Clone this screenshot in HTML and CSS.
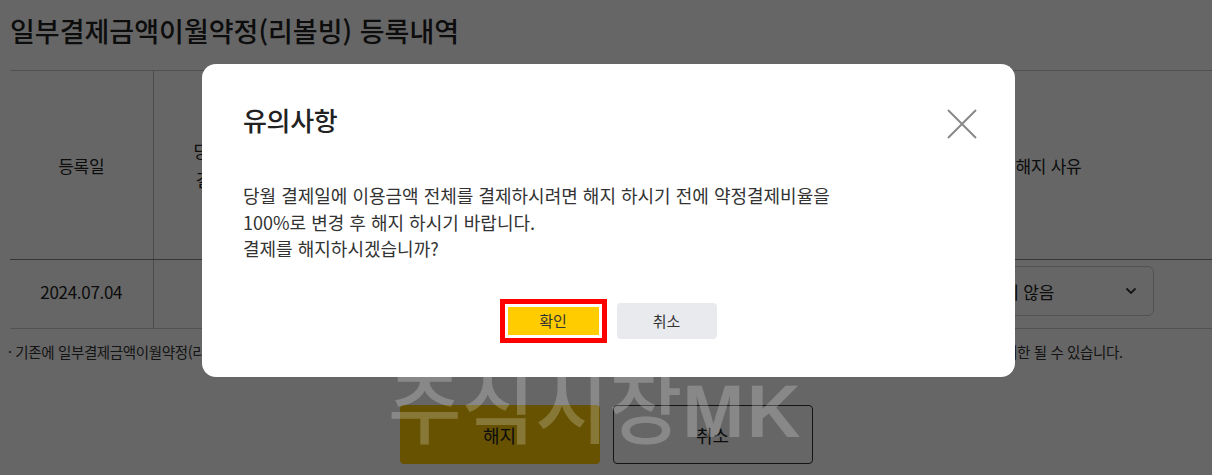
FILE: index.html
```html
<!DOCTYPE html>
<html lang="ko">
<head>
    <meta charset="UTF-8">
    <meta name="viewport" content="width=device-width, initial-scale=1.0">
    <title>리볼빙 등록내역</title>
    <link rel="stylesheet" href="styles.css">
</head>
<body>
<div class="page">
    <h2 class="page-title">일부결제금액이월약정(리볼빙) 등록내역</h2>

    <table class="history">
        <colgroup>
            <col class="col-date">
            <col class="col-rate">
            <col class="col-mid">
            <col class="col-mid">
            <col class="col-reason">
        </colgroup>
        <thead>
        <tr>
            <th>등록일</th>
            <th>당월 약정<br>결제비율</th>
            <th>약정결제비율</th>
            <th>최소결제비율</th>
            <th class="th-reason">해지 사유</th>
        </tr>
        </thead>
        <tbody>
        <tr>
            <td>2024.07.04</td>
            <td>10%</td>
            <td>10%</td>
            <td>10%</td>
            <td class="td-reason">
                <div class="select-box">
                    <span>선택하지 않음</span>
                    <svg width="12" height="8" viewBox="0 0 12 8"><path d="M1.5 1.5 L6 6 L10.5 1.5" fill="none" stroke="#333" stroke-width="1.8"/></svg>
                </div>
            </td>
        </tr>
        </tbody>
    </table>

    <p class="note">· 기존에 일부결제금액이월약정(리볼빙)을 이용 중이신 고객님께서 해지하실 경우 일부결제금액이월약정(리볼빙) 잔액은 기존 조건으로 상환되며 향후 일정 기간 신규 이용이 제한 될 수 있습니다.</p>

    <div class="actions">
        <button class="btn btn-primary">해지</button>
        <button class="btn btn-outline">취소</button>
    </div>
</div>

<div class="dim"></div>
<div class="watermark">주식시장<span class="wm-latin">MK</span></div>

<div class="modal">
    <div class="modal-head">
        <h3 class="modal-title">유의사항</h3>
        <button class="modal-close" aria-label="닫기">
            <svg width="30" height="30" viewBox="0 0 30 30"><path d="M1 1 L29 29 M29 1 L1 29" stroke="#8a8a8a" stroke-width="2"/></svg>
        </button>
    </div>
    <div class="modal-body">
        <p>당월 결제일에 이용금액 전체를 결제하시려면 해지 하시기 전에 약정결제비율을<br>100%로 변경 후 해지 하시기 바랍니다.<br>결제를 해지하시겠습니까?</p>
    </div>
    <div class="modal-foot">
        <button class="modal-btn confirm">확인</button>
        <button class="modal-btn cancel">취소</button>
    </div>
</div>
</body>
</html>
```

FILE: styles.css
```css
body {
    margin: 0;
    padding: 0;
    background-color: #fff;
    font-family: "Noto Sans CJK KR", "Noto Sans", sans-serif;
    color: #222;
    overflow: hidden;
}

.page {
    padding: 0 0 0 10px;
}

.page-title {
    margin: 0;
    padding-top: 13px;
    height: 70px;
    box-sizing: border-box;
    font-size: 27px;
    font-weight: 500;
    line-height: 36px;
    color: #222;
}

.history {
    width: 1202px;
    border-collapse: collapse;
    table-layout: fixed;
    border-top: 1px solid #c8c8c8;
}

.col-date { width: 143px; }
.col-rate { width: 147px; }
.col-mid { width: 340px; }
.col-reason { width: 232px; }

th, td {
    font-weight: 400;
    font-size: 17px;
    letter-spacing: -0.3px;
    text-align: center;
    border-left: 1px solid #bbb;
    color: #222;
}

th:first-child, td:first-child {
    border-left: none;
}

th {
    height: 186px;
    padding: 1px;
    line-height: 29px;
    border-bottom: 1px solid #888;
}

td {
    height: 62px;
    padding: 0 0 6px;
    border-bottom: 1px solid #ccc;
}

.th-reason {
    text-align: left;
    padding-left: 35px;
}

.td-reason {
    padding: 0 58px 6px 0;
}

.select-box {
    display: flex;
    align-items: center;
    justify-content: space-between;
    height: 50px;
    box-sizing: border-box;
    margin-left: -40px;
    padding: 0 16px;
    border: 1px solid #ccc;
    border-radius: 6px;
}

.note {
    margin: 12px 0 0 -2px;
    font-size: 14.5px;
    letter-spacing: -0.37px;
    white-space: nowrap;
    color: #333;
}

.actions {
    display: flex;
    justify-content: center;
    gap: 13px;
    margin-top: 43px;
    padding-right: 10px;
}

.btn {
    width: 200px;
    height: 59px;
    border-radius: 4px;
    font-family: inherit;
    font-size: 18px;
    color: #222;
}

.btn-primary {
    background-color: #ffcc00;
    border: none;
}

.btn-outline {
    background-color: #fff;
    border: 1px solid #333;
}

.dim {
    position: fixed;
    inset: 0;
    background-color: rgba(0, 0, 0, 0.6);
}

.watermark {
    position: fixed;
    left: 388px;
    top: 362px;
    font-size: 80px;
    font-weight: 500;
    line-height: 1;
    color: rgba(255, 255, 255, 0.22);
    white-space: nowrap;
}

.wm-latin {
    font-family: "Liberation Sans", sans-serif;
    font-size: 74px;
    font-weight: 700;
    letter-spacing: 3px;
}

.modal {
    position: fixed;
    left: 202px;
    top: 64px;
    width: 813px;
    height: 313px;
    box-sizing: border-box;
    padding: 34px 38px 0 41px;
    background-color: #fff;
    border-radius: 14px;
    display: flex;
    flex-direction: column;
}

.modal-head {
    display: flex;
    justify-content: space-between;
    align-items: flex-start;
}

.modal-title {
    margin: 0;
    font-size: 26px;
    font-weight: 500;
    letter-spacing: -0.3px;
    line-height: 44px;
    color: #222;
}

.modal-close {
    margin-top: 11px;
    padding: 0;
    border: none;
    background: none;
    width: 30px;
    height: 30px;
}

.modal-body p {
    margin: 40px 0 0 0;
    font-size: 18px;
    line-height: 26.5px;
    color: #333;
}

.modal-foot {
    display: flex;
    justify-content: center;
    align-items: center;
    gap: 18px;
    margin-top: 41px;
    padding-left: 4px;
}

.modal-btn {
    font-family: inherit;
    font-size: 15px;
    color: #333;
    border: none;
    padding: 0;
}

.modal-btn.confirm {
    width: 91px;
    height: 28px;
    background-color: #ffcc00;
    box-shadow: 0 0 0 3px #fff, 0 0 0 8px #ff0000;
}

.modal-btn.cancel {
    width: 100px;
    height: 36px;
    background-color: #e8eaee;
    border-radius: 4px;
}
```
